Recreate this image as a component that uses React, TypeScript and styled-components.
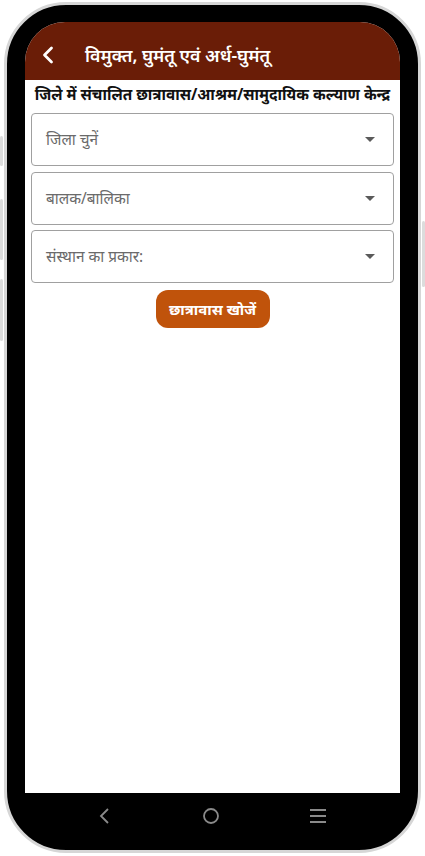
import styled, { createGlobalStyle } from 'styled-components';

const GlobalStyle = createGlobalStyle`
  html, body {
    margin: 0;
    padding: 0;
    background: #ffffff;
  }
  body {
    font-family: "Noto Sans", "Noto Sans Devanagari", sans-serif;
  }
`;

const Page = styled.div`
  width: 425px;
  height: 856px;
  padding: 2px 0 0 4px;
  box-sizing: border-box;
`;

const Frame = styled.div`
  position: relative;
  width: 417px;
  height: 851px;
  box-sizing: border-box;
  border: 3px solid #d6d6d6;
  border-radius: 62px;
  background: #000;
  padding: 17px 18px 0;
  display: flex;
  flex-direction: column;
`;

const SideKey = styled.span<{ $side: 'left' | 'right'; $top: number; $h: number }>`
  position: absolute;
  ${(p) => (p.$side === 'left' ? 'left: -7px;' : 'right: -7px;')}
  top: ${(p) => p.$top}px;
  width: 3px;
  height: ${(p) => p.$h}px;
  background: #dcdcdc;
  border-radius: 2px;
`;

const Screen = styled.div`
  flex: 1;
  display: flex;
  flex-direction: column;
  background: #fff;
  border-radius: 40px 40px 0 0;
  overflow: hidden;
`;

const Header = styled.header`
  height: 58px;
  background: #6a1d07;
  display: flex;
  align-items: center;
  padding: 8px 0 0 16px;
  box-sizing: border-box;
  gap: 30px;
  color: #fff;
`;

const Title = styled.h1`
  margin: 0;
  font-size: 17.8px;
  font-weight: 600;
  letter-spacing: 0;
`;

const Content = styled.main`
  flex: 1;
  display: flex;
  flex-direction: column;
  align-items: center;
  padding: 3px 6px 0;
`;

const Heading = styled.h2`
  margin: 0 0 8px;
  font-size: 15.3px;
  font-weight: 700;
  color: #111;
  text-align: center;
  line-height: 22px;
  white-space: nowrap;
`;

const SelectBox = styled.div`
  width: 100%;
  height: 53px;
  box-sizing: border-box;
  border: 1px solid #a0a0a0;
  border-radius: 4px;
  margin-bottom: 5.5px;
  display: flex;
  align-items: center;
  justify-content: space-between;
  padding: 0 18px 0 14px;
  color: #6a6a6a;
  font-size: 15.4px;
`;

const Caret = styled.span`
  width: 0;
  height: 0;
  border-left: 5px solid transparent;
  border-right: 5px solid transparent;
  border-top: 5px solid #5a5a5a;
`;

const SearchButton = styled.button`
  margin-top: 1px;
  width: 114px;
  height: 38px;
  border: none;
  border-radius: 12px;
  background: #c0530b;
  color: #fff;
  font-family: inherit;
  font-size: 15px;
  font-weight: 700;
`;

const NavBar = styled.nav`
  height: 57px;
  display: flex;
  align-items: center;
  justify-content: space-between;
  padding: 0 73px 12px 73px;
  box-sizing: border-box;
`;

const options = ['जिला चुनें', 'बालक/बालिका', 'संस्थान का प्रकार:'];

export default function App() {
  return (
    <Page>
      <GlobalStyle />
      <Frame>
        <SideKey $side="left" $top={131} $h={30} />
        <SideKey $side="left" $top={194} $h={61} />
        <SideKey $side="left" $top={274} $h={62} />
        <SideKey $side="right" $top={216} $h={66} />
        <Screen>
          <Header>
            <svg width="14" height="18" viewBox="0 0 14 18">
              <path d="M10.5 2 L3.5 9 L10.5 16" fill="none" stroke="#fff" strokeWidth="2.8" strokeLinecap="round" strokeLinejoin="round" />
            </svg>
            <Title>विमुक्त, घुमंतू एवं अर्ध-घुमंतू</Title>
          </Header>
          <Content>
            <Heading>जिले में संचालित छात्रावास/आश्रम/सामुदायिक कल्याण केन्द्र</Heading>
            {options.map((o) => (
              <SelectBox key={o}>
                <span>{o}</span>
                <Caret />
              </SelectBox>
            ))}
            <SearchButton>छात्रावास खोजें</SearchButton>
          </Content>
        </Screen>
        <NavBar>
          <svg width="14" height="18" viewBox="0 0 14 18">
            <path d="M10 2 L3 9 L10 16" fill="none" stroke="#8a8a8a" strokeWidth="1.8" />
          </svg>
          <svg width="18" height="18" viewBox="0 0 18 18">
            <circle cx="9" cy="9" r="7" fill="none" stroke="#8a8a8a" strokeWidth="1.8" />
          </svg>
          <svg width="18" height="16" viewBox="0 0 18 16">
            <path d="M1 2 H17 M1 8 H17 M1 14 H17" stroke="#8a8a8a" strokeWidth="1.8" />
          </svg>
        </NavBar>
      </Frame>
    </Page>
  );
}
